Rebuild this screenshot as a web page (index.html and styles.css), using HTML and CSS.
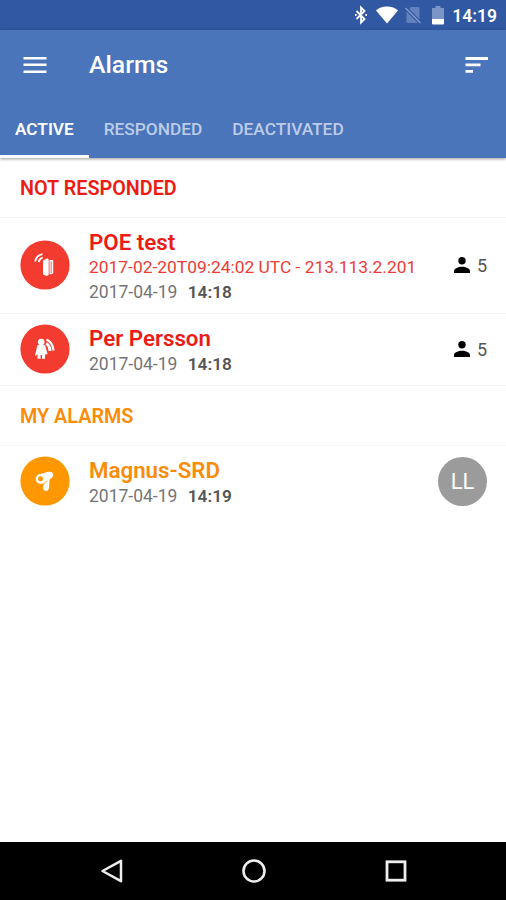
FILE: index.html
```html
<!DOCTYPE html>
<html lang="en">
<head>
    <meta charset="UTF-8">
    <meta name="viewport" content="width=device-width, initial-scale=1.0">
    <title>Alarms</title>
    <link rel="stylesheet" href="styles.css">
</head>
<body>
    <div class="screen">
        <div class="status-bar">
            <svg class="bluetooth" width="14" height="20" viewBox="0 0 14 20" fill="none" stroke="#fff" stroke-width="1.8">
                <path d="M2.5 6l8 8-3.500 3.500v-15L10.500 6l-8 8"/>
                <path d="M1 10h1.600M11.400 10H13"/>
            </svg>
            <svg class="wifi" width="22" height="18" viewBox="0 0 22 18">
                <path fill="#fff" d="M11 17.500L0 4.600C2.600 2 6.600.6 11 .6S19.400 2 22 4.600z"/>
            </svg>
            <svg class="sim" width="16" height="18" viewBox="0 0 16 18">
                <path fill="#6381bd" d="M6 1h7.500q1 0 1 1v11.500L4.200 3zM1.500 5.500L13 17H2.500q-1 0-1-1z"/>
                <path stroke="#8aa0cf" stroke-width="1.300" d="M.5 2L15.500 17"/>
            </svg>
            <svg class="battery" width="12" height="19" viewBox="0 0 12 19">
                <path fill="#7c95c9" d="M3.500 0h5v2H12v11H0V2h3.500z"/>
                <path fill="#fff" d="M0 13h12v4.500q0 1-1 1H1q-1 0-1-1z"/>
            </svg>
            <span class="clock">14:19</span>
        </div>

        <header class="app-bar">
            <div class="toolbar">
                <svg width="24" height="18" viewBox="0 0 24 18">
                    <path fill="#fff" d="M.5 1h23v2.500H.5zM.5 7.500h23V10H.5zM.5 14.500h23V17H.5z"/>
                </svg>
                <h1>Alarms</h1>
                <svg width="24" height="18" viewBox="0 0 24 18">
                    <path fill="#fff" d="M.5 1h22.500v3H.5zM.5 7.500h15v2.700H.5zM.5 14h7.500v2.800H.5z"/>
                </svg>
            </div>
            <nav class="tabs">
                <a class="tab active">ACTIVE</a>
                <a class="tab">RESPONDED</a>
                <a class="tab">DEACTIVATED</a>
            </nav>
        </header>

        <main class="list">
            <h2 class="section red">NOT RESPONDED</h2>
            <div class="row tall">
                <svg class="badge" width="50" height="50" viewBox="0 0 50 50">
                    <circle cx="25" cy="25" r="24.600" fill="#f43b2f"/>
                    <!-- door with radio waves -->
                    <path fill="none" stroke="#fff" stroke-width="1.800" d="M15.200 21.500q1-6 7.300-7.300M18.700 22q.8-3.500 4-4.500"/>
                    <path fill="#fff" d="M23 20.500l4.500-2.300 1.200 1.300v15.300l-1.700 1.200-4-1.500zM29.500 20h3.700v13.500l-3.700 1z"/>
                    <path stroke="#f43b2f" stroke-width=".8" d="M31.200 21.500V33"/>
                </svg>
                <div class="info">
                    <div class="name red">POE test</div>
                    <div class="detail red">2017-02-20T09:24:02 UTC - 213.113.2.201</div>
                    <div class="date">2017-04-19 <b>14:18</b></div>
                </div>
                <div class="count">
                    <svg width="16" height="16" viewBox="0 0 16 16">
                        <circle cx="8" cy="3.800" r="3.700"/>
                        <path d="M0 16v-2c0-2.600 4.500-4.200 8-4.200s8 1.600 8 4.200v2z"/>
                    </svg>
                    <span>5</span>
                </div>
            </div>
            <div class="row">
                <svg class="badge" width="50" height="50" viewBox="0 0 50 50">
                    <circle cx="25" cy="25" r="24.600" fill="#f43b2f"/>
                    <!-- person with radio waves -->
                    <circle cx="21.200" cy="18" r="3.300" fill="#fff"/>
                    <path fill="#fff" d="M17.500 21h7.500l2.500 9-1.800.8-.7-1v5h-3V31h-1.400v3.800h-3V30l-1.800 2-.8-.7z"/>
                    <path fill="none" stroke="#fff" stroke-width="2.200" d="M26.500 15.500q6.500 3 7 11"/>
                    <path fill="none" stroke="#fff" stroke-width="3" d="M26.200 19.500q3.500 2 3.800 7.500"/>
                </svg>
                <div class="info">
                    <div class="name red">Per Persson</div>
                    <div class="date">2017-04-19 <b>14:18</b></div>
                </div>
                <div class="count">
                    <svg width="16" height="16" viewBox="0 0 16 16">
                        <circle cx="8" cy="3.800" r="3.700"/>
                        <path d="M0 16v-2c0-2.600 4.500-4.200 8-4.200s8 1.600 8 4.200v2z"/>
                    </svg>
                    <span>5</span>
                </div>
            </div>

            <h2 class="section orange">MY ALARMS</h2>
            <div class="row last">
                <svg class="badge" width="50" height="50" viewBox="0 0 50 50">
                    <circle cx="25" cy="25" r="24.600" fill="#ff9800"/>
                    <!-- handheld detector -->
                    <path fill="#fff" d="M19 18.500l9-2.700q4.500-.8 5.200 2.200.4 3-3.700 5.500l-.5 8.500q-.8 3.500-3.500 3-2.800-.7-2.300-4l.5-4z"/>
                    <circle cx="20.700" cy="23" r="5" fill="#fff"/>
                    <circle cx="20.500" cy="22.800" r="2.500" fill="#ff9800"/>
                    <path stroke="#ff9800" stroke-width=".8" d="M23.500 28l4-3.200"/>
                </svg>
                <div class="info">
                    <div class="name orange">Magnus-SRD</div>
                    <div class="date">2017-04-19 <b>14:19</b></div>
                </div>
                <div class="avatar">LL</div>
            </div>
        </main>

        <footer class="nav-bar">
            <svg width="24" height="26" viewBox="0 0 24 26">
                <path fill="none" stroke="#eee" stroke-width="2.500" stroke-linejoin="round" d="M2.500 13L21 2.800v20.400z"/>
            </svg>
            <svg width="24" height="26" viewBox="0 0 24 26">
                <circle cx="12" cy="13" r="10.500" fill="none" stroke="#eee" stroke-width="2.600"/>
            </svg>
            <svg width="24" height="26" viewBox="0 0 24 26">
                <rect x="3" y="3.800" width="18" height="18.400" fill="none" stroke="#eee" stroke-width="2.800"/>
            </svg>
        </footer>
    </div>
</body>
</html>
```

FILE: styles.css
```css
* {
    margin: 0;
    padding: 0;
    box-sizing: border-box;
}

body {
    font-family: Roboto, sans-serif;
    background: #fff;
}

svg {
    display: block;
    flex: none;
}

.screen {
    display: flex;
    flex-direction: column;
    height: 900px;
}

.status-bar {
    display: flex;
    align-items: center;
    justify-content: flex-end;
    height: 30px;
    padding-right: 9px;
    background: #3058a3;
    color: #fff;
}

.bluetooth {
    margin-right: 8px;
}

.wifi {
    margin-right: 7px;
}

.sim {
    margin-right: 11px;
}

.battery {
    margin-right: 8px;
}

.clock {
    font-size: 17.5px;
    font-weight: 600;
    line-height: 30px;
    padding-top: 2px;
}

.app-bar {
    height: 128px;
    background: #4a75ba;
    color: #fff;
    box-shadow: 0 1px 3px rgba(0, 0, 0, 0.4);
}

.toolbar {
    display: flex;
    align-items: center;
    height: 70px;
    padding: 0 17px 0 23px;
}

.toolbar h1 {
    flex: 1;
    margin-left: 42px;
    font-size: 24.8px;
    font-weight: 500;
    line-height: 30px;
}

.tabs {
    display: flex;
    height: 58px;
}

.tab {
    padding: 0 15px;
    font-size: 17.3px;
    font-weight: 500;
    line-height: 59px;
    color: #bccce8;
}

.tab.active {
    font-size: 17.2px;
    font-weight: 600;
    color: #fff;
    border-bottom: 3px solid #fff;
}

.list {
    flex: 1;
}

.section {
    height: 60px;
    padding-left: 20px;
    font-size: 19.8px;
    font-weight: 600;
    line-height: 61px;
    border-bottom: 1px solid #f5f5f5;
}

.red {
    color: #ec1c14;
}

.orange {
    color: #fb8c0a;
}

.row {
    display: flex;
    align-items: center;
    height: 72px;
    padding: 0 19px 0 20px;
    border-bottom: 1px solid #f5f5f5;
}

.row.tall {
    height: 96px;
}

.row.last {
    border-bottom: none;
    height: 71px;
}

.badge {
    margin: -1px 0 0 -0.5px;
}

.info {
    flex: 1;
    margin-left: 19.5px;
    padding-top: 2px;
}

.name {
    font-size: 22.3px;
    font-weight: 600;
    line-height: 26px;
}

.detail {
    font-size: 17.4px;
    line-height: 25px;
    color: #ee3b34;
}

.date {
    font-size: 17.5px;
    line-height: 24px;
    padding-top: 1px;
    color: #757575;
}

.detail + .date {
    padding-top: 0;
}

.date b {
    margin-left: 6px;
    font-size: 17.3px;
    font-weight: 600;
    color: #555;
}

.count {
    display: flex;
    align-items: center;
    gap: 7px;
    font-size: 18px;
    color: #555;
}

.count svg {
    margin-top: -2px;
    fill: #000;
}

.avatar {
    width: 49px;
    height: 49px;
    border-radius: 50%;
    background: #9b9b9b;
    color: #fff;
    font-size: 22px;
    line-height: 50px;
    text-align: center;
}

.nav-bar {
    display: flex;
    align-items: center;
    justify-content: space-between;
    height: 58px;
    padding: 0 98px 0 100px;
    background: #000;
}
```
